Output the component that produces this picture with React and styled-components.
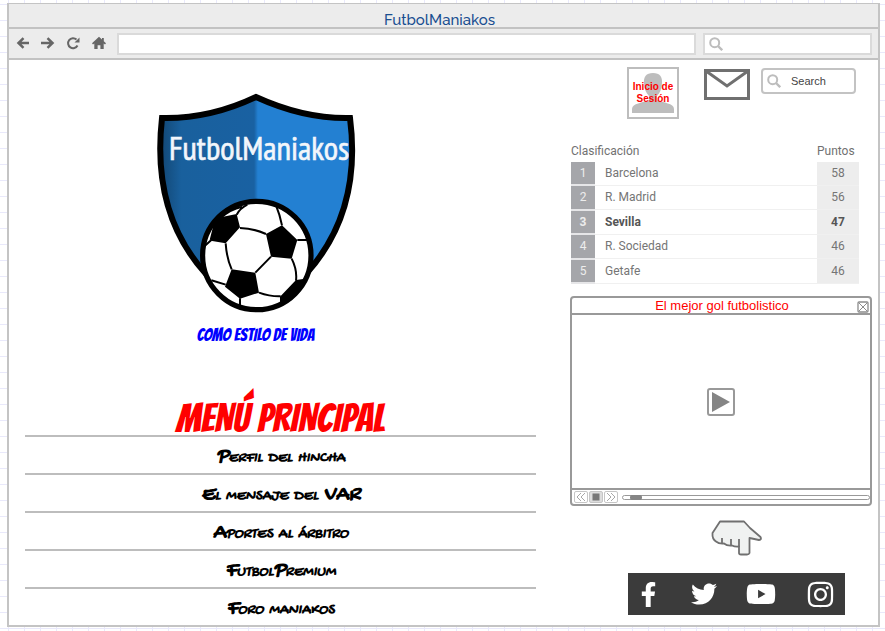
import React from "react";
import styled, { createGlobalStyle } from "styled-components";
import { FaFacebookF, FaTwitter, FaYoutube, FaInstagram } from "react-icons/fa";

const GlobalStyle = createGlobalStyle`
  *, *::before, *::after { box-sizing: border-box; }
  body {
    margin: 0;
    font-family: Roboto, "Liberation Sans", sans-serif;
    background-color: #fff;
    background-image:
      linear-gradient(#e9e9fb 1px, transparent 1px),
      linear-gradient(90deg, #e9e9fb 1px, transparent 1px);
    background-size: 16px 16px;
    background-position: 8px 4px;
  }
  button { padding: 0; border: 0; background: none; font: inherit; cursor: pointer; }
  a { color: inherit; text-decoration: none; }
`;

const Window = styled.div`
  margin: 3px 5px 5px 7px;
  border: 2px solid #c4c4c4;
  border-top-width: 1px;
  background: #fff;
`;

const TitleBar = styled.header`
  display: flex;
  justify-content: center;
  height: 25px;
  padding: 6px 8px 0 0;
  border-bottom: 2px solid #c2c2c2;
  background: #ececec;
  color: #1a4f91;
  font: 500 15px/20px Raleway, Lato, sans-serif;
`;

const Toolbar = styled.div`
  display: flex;
  align-items: center;
  gap: 7px;
  height: 31px;
  padding: 0 6px;
  border-bottom: 2px solid #c2c2c2;
  background: #ececec;
`;

const NavButtons = styled.div`
  display: flex;
  gap: 9px;
  flex: none;
  width: 95px;
`;

const IconButton = styled.button`
  display: flex;
  width: 16px;
  height: 16px;
`;

const AddressInput = styled.input`
  flex: 1;
  min-width: 0;
  height: 22px;
  padding: 0 8px;
  border: 2px solid #dadada;
  background: #fff;
  font: 12px Roboto, sans-serif;
`;

const SearchBox = styled.label`
  display: flex;
  align-items: center;
  gap: ${(p) => (p.$rounded ? 10 : 4)}px;
  flex: none;
  width: ${(p) => (p.$rounded ? 95 : 169)}px;
  height: ${(p) => (p.$rounded ? 26 : 22)}px;
  padding: 0 4px;
  border: 2px solid ${(p) => (p.$rounded ? "#c3c3c3" : "#dadada")};
  border-radius: ${(p) => (p.$rounded ? 4 : 0)}px;
  background: #fff;

  svg { flex: none; }
  input {
    flex: 1;
    min-width: 0;
    padding: 0;
    border: 0;
    outline: 0;
    background: none;
    color: #444;
    font: 11px/16px "Liberation Sans", sans-serif;
  }
  input::placeholder { color: #444; opacity: 1; }
`;

const Content = styled.main`
  display: grid;
  grid-template-columns: minmax(0, 1fr) 302px;
  gap: 34px;
  padding: 7px 6px 0 16px;
`;

const Brand = styled.section`
  display: flex;
  flex-direction: column;
  align-items: center;
  padding: 25px 50px 0 0;
`;

const Slogan = styled.p`
  margin: 11px 0 0;
  color: #00f;
  font: 17px/20px Bangers, "Liberation Sans Narrow", sans-serif;
`;

const MenuTitle = styled.h1`
  margin: 56px 0 0;
  color: #f00;
  text-align: center;
  font: 40px/34px Bangers, "Liberation Sans Narrow", sans-serif;
`;

const MenuList = styled.ul`
  margin: 0;
  padding: 0;
  list-style: none;
`;

const MenuItem = styled.li`
  padding-top: 4px;
  border-top: 2px solid #bdbdbd;
  color: #000;
  text-align: center;
  font: italic small-caps bold 22px/32px "Permanent Marker", "Gochi Hand", Lato, sans-serif;
`;

const Side = styled.aside`
  display: flex;
  flex-direction: column;
`;

const Actions = styled.div`
  display: flex;
  justify-content: flex-end;
  align-items: flex-start;
  padding-right: 16px;
`;

const Login = styled.button`
  display: grid;
  place-items: center;
  width: 52px;
  height: 52px;
  margin-right: 25px;
  border: 2px solid #bdbdbd;
  background: #fff;
  color: #f00;
  font: bold 10px/12px "Liberation Sans", sans-serif;

  > * { grid-area: 1 / 1; }
  svg { place-self: end center; margin-bottom: 4px; }
`;

const MailButton = styled.button`
  display: flex;
  margin: 2px 11px 0 0;
`;

const SearchSlot = styled.div`
  padding-top: 1px;
`;

const Table = styled.table`
  width: 288px;
  height: 144px;
  margin: 21px 0 0 1px;
  border-collapse: collapse;
  color: #717171;
  font-size: 12px;
  line-height: 16px;
`;

const HeadCell = styled.th`
  width: ${(p) => (p.$points ? "42px" : "auto")};
  height: 22px;
  padding: 0 ${(p) => (p.$points ? 4 : 0)}px 0 0;
  text-align: left;
  font-weight: 400;
`;

const Row = styled.tr`
  border-bottom: 1px solid #f0f0f0;
  font-weight: ${(p) => (p.$strong ? 700 : 400)};
  color: ${(p) => (p.$strong ? "#555" : "#757575")};
`;

const Rank = styled.td`
  width: 24px;
  padding: 0;
  border-bottom: 2px solid #e6e6e8;
  background: #a5a6aa;
  color: #ededed;
  text-align: center;
`;

const Team = styled.td`
  padding: 0 10px;
`;

const Points = styled.td`
  width: 42px;
  padding: 0;
  background: #ededed;
  text-align: center;
`;

const Player = styled.section`
  display: flex;
  flex-direction: column;
  margin-top: 12px;
  border: 2px solid #999;
  border-radius: 4px;
`;

const PlayerHead = styled.div`
  display: grid;
  grid-template-columns: 14px 1fr 14px;
  align-items: center;
  height: 17px;
  border-bottom: 2px solid #999;

  h2 {
    grid-column: 2;
    margin: 0;
    padding: 0 0 4px 2px;
    color: #f00;
    text-align: center;
    font: 400 13px/11px "Liberation Sans", sans-serif;
  }
`;

const Screen = styled.div`
  display: grid;
  place-items: center;
  height: 173px;
`;

const PlayButton = styled.button`
  display: grid;
  place-items: center;
  width: 28px;
  height: 28px;
  border: 2px solid #999;
  border-radius: 3px;
`;

const Controls = styled.div`
  display: flex;
  align-items: center;
  gap: 1px;
  height: 16px;
  padding-left: 2px;
  border-top: 2px solid #999;
`;

const ControlButton = styled.button`
  display: grid;
  place-items: center;
  width: 14px;
  height: 12px;
  border: 1px solid #c6c6c6;
  border-radius: 2px;
  background: ${(p) => (p.$active ? "#ddd" : "#fff")};
`;

const Seek = styled.input`
  appearance: none;
  flex: 1;
  min-width: 0;
  height: 5px;
  margin: 0 0 0 3px;
  border: 1px solid #999;
  border-radius: 3px;
  background: #fff;

  &::-webkit-slider-thumb {
    appearance: none;
    width: 12px;
    height: 5px;
    border-radius: 2px;
    background: #858585;
  }
`;

const Hand = styled.div`
  display: flex;
  justify-content: center;
  margin: 14px 0 17px;
  padding-left: 32px;
`;

const Social = styled.nav`
  display: flex;
  align-items: center;
  justify-content: space-between;
  align-self: flex-end;
  width: 217px;
  height: 42px;
  margin: 0 27px 9px 0;
  padding: 0 10px 0 8px;
  background: #3b3b3b;
  color: #fff;

  a { display: flex; }
`;

function Magnifier() {
  return (
    <svg width="14" height="14" viewBox="0 0 14 14" fill="none" stroke="#bdbdbd" strokeWidth="2">
      <circle cx="5.7" cy="5.7" r="4.5" />
      <path d="M9 9l4.2 4.2" strokeWidth="2.4" />
    </svg>
  );
}

const toolbarIcons = [
  { label: "Atrás", drawing: <path d="M14 7H4M8.5 2.2L3.5 7l5 4.8" /> },
  { label: "Adelante", drawing: <path d="M1 7h11M7.5 2.2L12.5 7l-5 4.8" /> },
  {
    label: "Recargar",
    drawing: (
      <>
        <path d="M12.5 9.5A5 5 0 1 1 11.5 3.5" strokeWidth="2" />
        <path d="M14.5 1.5V6.5H9.5z" fill="#666" stroke="none" />
      </>
    ),
  },
  {
    label: "Inicio",
    drawing: <path d="M9 0.8L2 7.3l1 1.1 1.3-1V13h3.3V9.2h2.8V13h3.3V7.4l1.3 1 1-1.1-2.2-2V2H12v1.6z" fill="#666" stroke="none" />,
  },
];

function Logo() {
  return (
    <svg width="202" height="222" viewBox="155 92 202 222" role="img" aria-label="FutbolManiakos">
      <defs>
        <linearGradient id="shield" gradientUnits="userSpaceOnUse" x1="160" x2="352" y1="0" y2="0">
          <stop offset="0" stopColor="#124673" />
          <stop offset="0.11" stopColor="#19609d" />
          <stop offset="0.49" stopColor="#1961a2" />
          <stop offset="0.51" stopColor="#2380d2" />
          <stop offset="1" stopColor="#2380d2" />
        </linearGradient>
      </defs>
      <path
        d="M256 97Q210 119 162 118C155 180 168 232 206 274H306C344 232 358 180 350 118Q304 119 256 97Z"
        fill="url(#shield)"
      />
      <path
        d="M206 274C168 232 155 180 162 118Q210 119 256 97Q304 119 350 118C358 180 344 232 306 274"
        fill="none"
        stroke="#000"
        strokeWidth="6"
      />
      <text
        x="259"
        y="160"
        textAnchor="middle"
        fill="#f2f6fb"
        stroke="#f2f6fb"
        strokeWidth="0.6"
        fontSize="33"
        fontFamily="'PT Sans Narrow', 'Liberation Sans Narrow', sans-serif"
      >
        FutbolManiakos
      </text>
      <circle cx="256.8" cy="255.5" r="54.2" fill="#fff" stroke="#000" strokeWidth="5.2" />
      <g transform="translate(190 190) scale(.3333)">
        <path d="M92 82L140 72L150 112L107 160L62 152L75 100ZM228 132L276 106L322 150L305 206L243 200ZM125 238L196 248L207 308L150 326L105 290ZM270 320L318 270L345 266L332 302L302 332L270 342Z" />
        <path
          d="M140 74Q150 55 172 44M92 84Q120 58 156 50M150 114Q190 115 228 132M107 160Q110 205 125 238M196 248L243 200M276 106Q270 75 258 46M322 150H355M305 206Q322 240 318 272M207 308Q240 320 272 319M150 325V348M107 284L64 271M64 150L44 168M75 100L62 150"
          fill="none"
          stroke="#000"
          strokeWidth="6"
        />
      </g>
    </svg>
  );
}

const menu = ["Perfil del hincha", "El mensaje del VAR", "Aportes al árbitro", "FutbolPremium", "Foro maniakos"];

const standings = [
  ["Barcelona", 58],
  ["R. Madrid", 56],
  ["Sevilla", 47],
  ["R. Sociedad", 46],
  ["Getafe", 46],
];

const networks = [
  { name: "Facebook", Icon: FaFacebookF, size: 25 },
  { name: "Twitter", Icon: FaTwitter, size: 26 },
  { name: "YouTube", Icon: FaYoutube, size: 30 },
  { name: "Instagram", Icon: FaInstagram, size: 29 },
];

export default function App() {
  return (
    <>
      <GlobalStyle />
      <Window>
        <TitleBar>FutbolManiakos</TitleBar>
        <Toolbar>
          <NavButtons>
            {toolbarIcons.map(({ label, drawing }) => (
              <IconButton key={label} aria-label={label}>
                <svg width="16" height="16" viewBox="0 0 16 16" fill="none" stroke="#666" strokeWidth="2.5">
                  {drawing}
                </svg>
              </IconButton>
            ))}
          </NavButtons>
          <AddressInput aria-label="Dirección" />
          <SearchBox>
            <Magnifier />
            <input type="text" aria-label="Buscar en la web" />
          </SearchBox>
        </Toolbar>
        <Content>
          <div>
            <Brand>
              <Logo />
              <Slogan>COMO ESTILO DE VIDA</Slogan>
            </Brand>
            <nav aria-labelledby="menu-title">
              <MenuTitle id="menu-title">MENÚ PRINCIPAL</MenuTitle>
              <MenuList>
                {menu.map((item) => (
                  <MenuItem key={item}>
                    <a href="#">{item}</a>
                  </MenuItem>
                ))}
              </MenuList>
            </nav>
          </div>
          <Side>
            <Actions>
              <Login>
                <svg width="44" height="40" viewBox="0 0 44 40" fill="#bdbdbd">
                  <path d="M22 0C15 0 12.5 4 13 10C13.4 16 15 20 18 23V27C12 30 1 30 1 36V40H43V36C43 30 32 30 26 27V23C29 20 30.6 16 31 10C31.5 4 29 0 22 0Z" />
                </svg>
                <span>Inicio de Sesión</span>
              </Login>
              <MailButton aria-label="Correo">
                <svg width="46" height="31" viewBox="0 0 46 31" fill="none" stroke="#707070" strokeWidth="3">
                  <path d="M1.5 1.5h43v28h-43zM2 2l21 15L44 2" />
                </svg>
              </MailButton>
              <SearchSlot>
                <SearchBox $rounded>
                  <Magnifier />
                  <input type="text" placeholder="Search" aria-label="Search" />
                </SearchBox>
              </SearchSlot>
            </Actions>
            <Table>
              <thead>
                <tr>
                  <HeadCell colSpan={2}>Clasificación</HeadCell>
                  <HeadCell $points>Puntos</HeadCell>
                </tr>
              </thead>
              <tbody>
                {standings.map(([team, points], i) => (
                  <Row key={team} $strong={i === 2}>
                    <Rank>{i + 1}</Rank>
                    <Team>{team}</Team>
                    <Points>{points}</Points>
                  </Row>
                ))}
              </tbody>
            </Table>
            <Player>
              <PlayerHead>
                <h2>El mejor gol futbolistico</h2>
                <button aria-label="Cerrar">
                  <svg width="12" height="12" viewBox="0 0 12 12" fill="none" stroke="#8c8c8c">
                    <rect x="1" y="1" width="10" height="10" rx="1" strokeWidth="1.3" />
                    <path d="M2 2l8 8M10 2l-8 8" />
                  </svg>
                </button>
              </PlayerHead>
              <Screen>
                <PlayButton aria-label="Reproducir">
                  <svg width="18" height="20" viewBox="0 0 18 20" fill="#858585">
                    <path d="M0 0L18 10L0 20Z" />
                  </svg>
                </PlayButton>
              </Screen>
              <Controls>
                <ControlButton aria-label="Retroceder">
                  <svg width="10" height="8" viewBox="0 0 10 8" fill="none" stroke="#a8a8a8">
                    <path d="M5 0L1 4l4 4M9 0L5 4l4 4" />
                  </svg>
                </ControlButton>
                <ControlButton aria-label="Detener" $active>
                  <svg width="8" height="8" viewBox="0 0 8 8" fill="#777">
                    <rect x="0.5" y="0.5" width="7" height="7" />
                  </svg>
                </ControlButton>
                <ControlButton aria-label="Avanzar">
                  <svg width="10" height="8" viewBox="0 0 10 8" fill="none" stroke="#a8a8a8">
                    <path d="M1 0l4 4-4 4M5 0l4 4-4 4" />
                  </svg>
                </ControlButton>
                <Seek type="range" min="0" max="100" defaultValue="3" aria-label="Posición del vídeo" />
              </Controls>
            </Player>
            <Hand>
              <svg width="52" height="36" viewBox="0 0 52 36" fill="#f0f2f1" stroke="#707070" strokeWidth="1.8" strokeLinejoin="round">
                <path d="M9 1.5H33L39 8L49.5 17Q51 19.5 48 20L38.5 18V33Q38 34.5 36 34.5H30Q28 34.5 28 33V26.5Q24 27 21 25.5Q16 26 13 23.5Q8 24 5 21.5Q1 19 1.5 13Z" />
                <path d="M11 18v6M20 19v6M28 19v8" fill="none" />
              </svg>
            </Hand>
            <Social aria-label="Redes sociales">
              {networks.map(({ name, Icon, size }) => (
                <a key={name} href="#" aria-label={name}>
                  <Icon size={size} />
                </a>
              ))}
            </Social>
          </Side>
        </Content>
      </Window>
    </>
  );
}
